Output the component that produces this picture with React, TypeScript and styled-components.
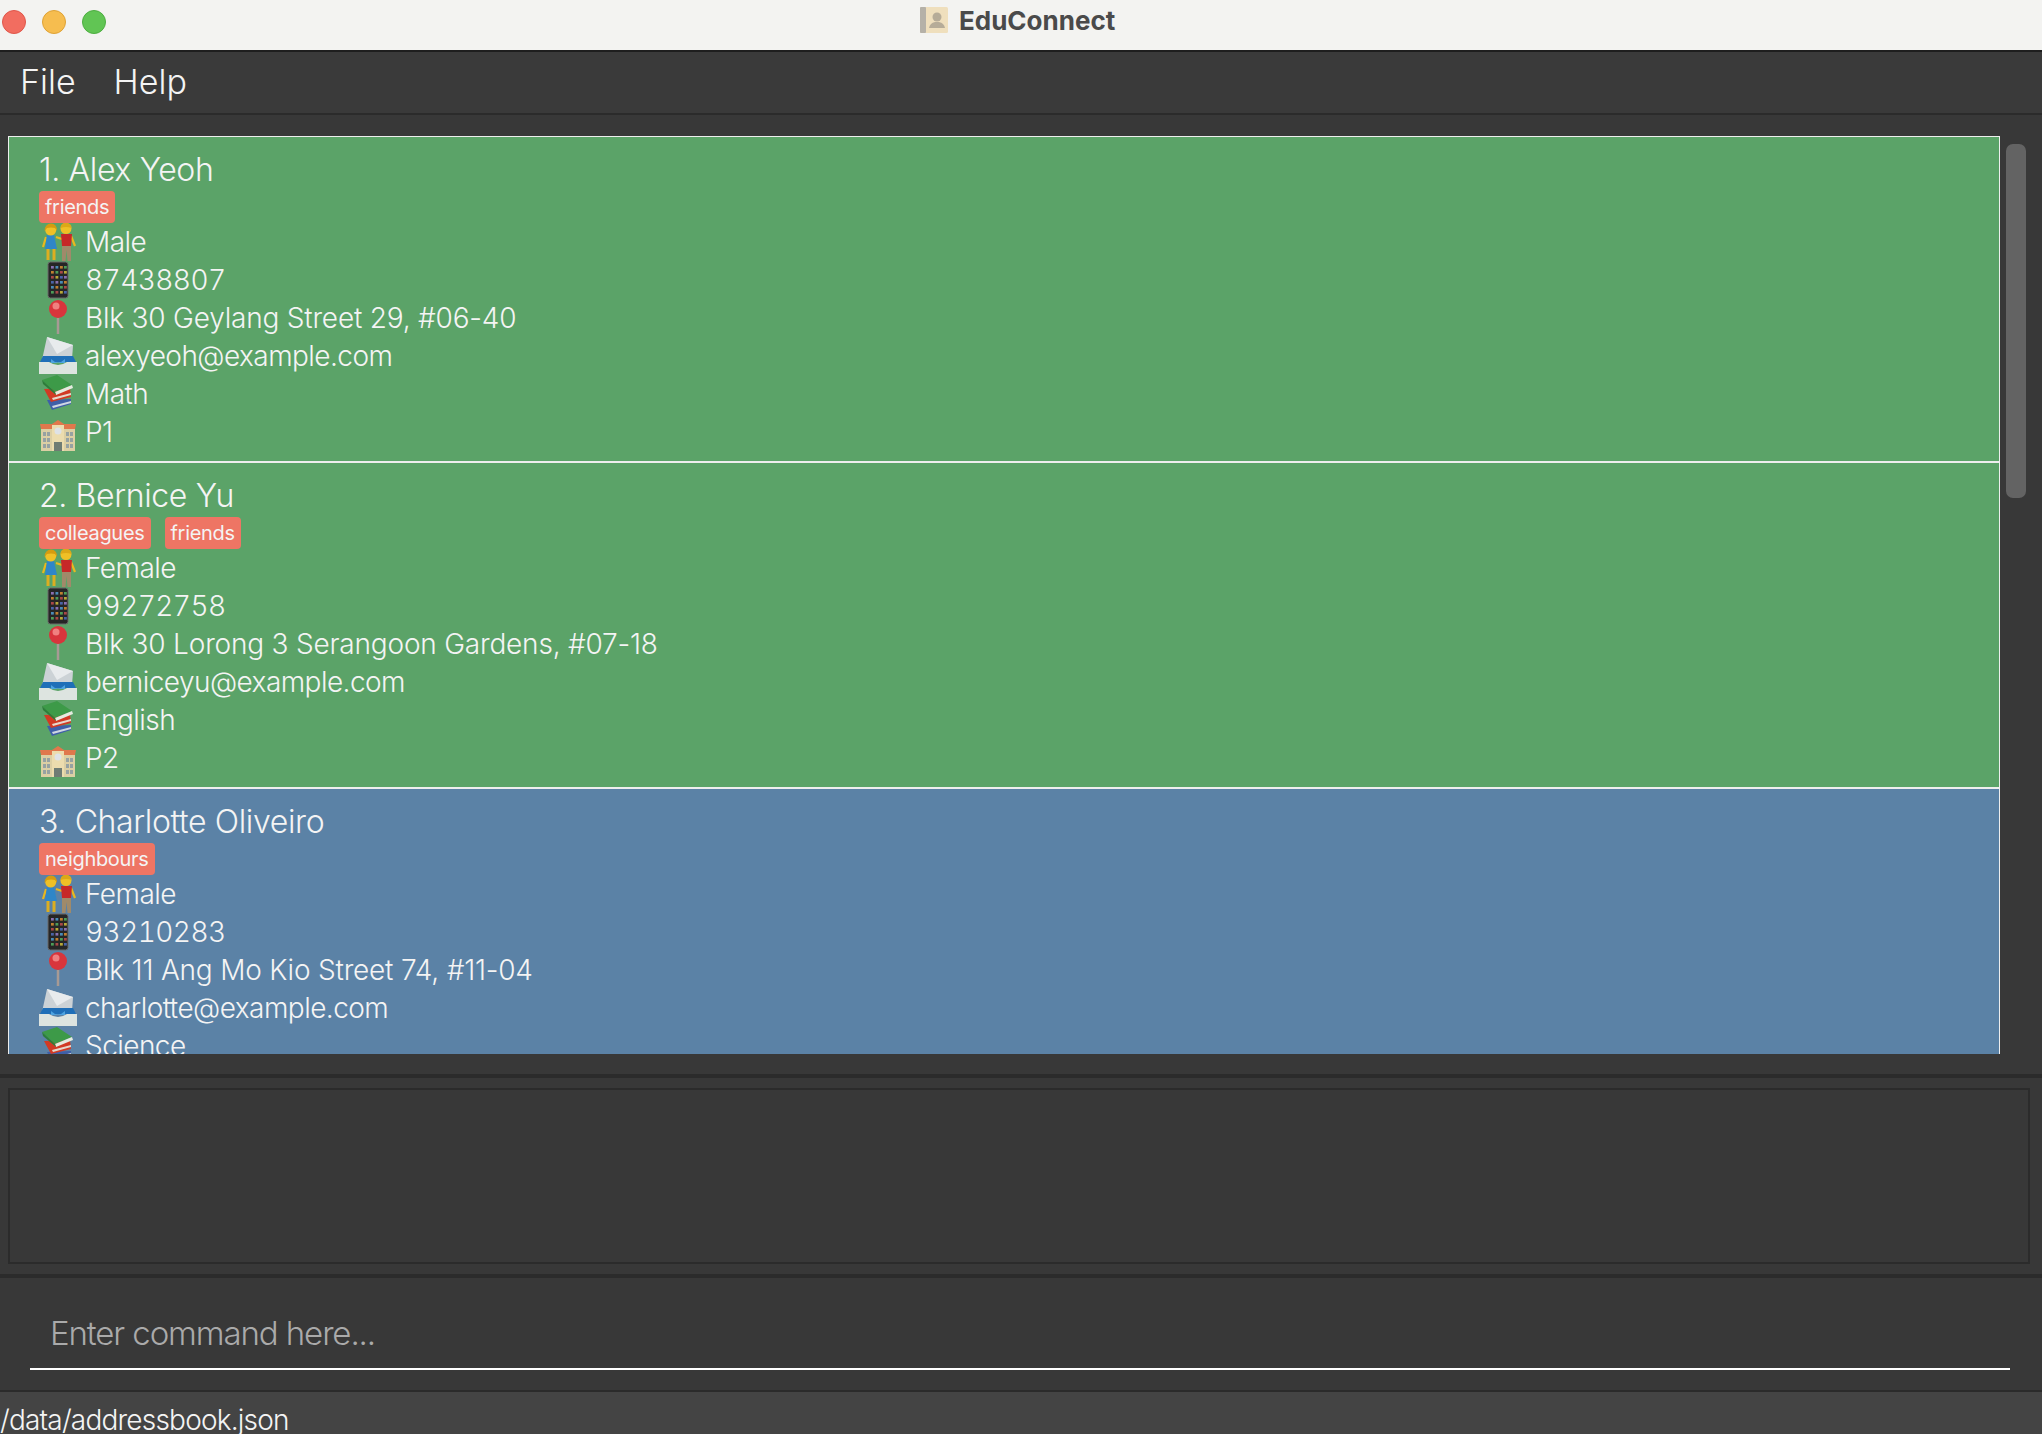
import React from 'react';
import styled, { createGlobalStyle } from 'styled-components';

const GlobalStyle = createGlobalStyle`
  html, body {
    margin: 0;
    padding: 0;
    background: #383838;
  }
  * {
    box-sizing: border-box;
  }
`;

const Window = styled.div`
  width: 2042px;
  height: 1434px;
  overflow: hidden;
  display: flex;
  flex-direction: column;
  background: #383838;
  color: #f4f4f4;
  font-family: Inter, 'Noto Sans', sans-serif;
`;

// macOS title bar
const TitleBar = styled.div`
  height: 52px;
  flex: none;
  display: flex;
  align-items: center;
  padding-bottom: 6px;
  background: #f3f3f1;
  border-bottom: 2px solid #1e1e1e;
  position: relative;
`;

const Lights = styled.div`
  display: flex;
  gap: 16px;
  padding-left: 2px;
`;

const Light = styled.span<{ $color: string; $edge: string }>`
  width: 24px;
  height: 24px;
  border-radius: 50%;
  background: ${props => props.$color};
  border: 1px solid ${props => props.$edge};
`;

const WindowTitle = styled.div`
  position: absolute;
  left: 920px;
  top: 6px;
  display: flex;
  align-items: center;
  gap: 11px;
  height: 28px;
  font-size: 26px;
  font-weight: 700;
  color: #4a4a4a;
`;

const MenuBar = styled.div`
  height: 63px;
  flex: none;
  display: flex;
  align-items: center;
  gap: 38px;
  padding: 0 0 2px 20px;
  background: #3a3a3a;
  border-bottom: 2px solid #2b2b2b;
  font-size: 34px;
  font-weight: 300;
`;

const ListPane = styled.div`
  height: 959px;
  flex: none;
  display: flex;
  align-items: flex-start;
  padding: 21px 0 0 8px;
`;

const ListViewport = styled.div`
  width: 1992px;
  height: 918px;
  overflow: hidden;
  flex: none;
`;

const ScrollThumb = styled.div`
  width: 20px;
  height: 354px;
  margin: 8px 0 0 6px;
  border-radius: 7px;
  background: #636363;
`;

const Card = styled.div<{ $tone: string }>`
  height: 326px;
  padding: 14px 0 0 30px;
  background: ${props => props.$tone};
  border: 1px solid #eeeeee;
`;

const Name = styled.div`
  height: 38px;
  line-height: 38px;
  font-size: 32px;
  font-weight: 300;
  letter-spacing: -0.35px;
`;

const TagRow = styled.div`
  display: flex;
  gap: 14px;
  margin-top: 2px;
`;

const Tag = styled.span`
  height: 32px;
  line-height: 32px;
  padding: 0 6px;
  border-radius: 4px;
  background: #ee7564;
  font-size: 20px;
  letter-spacing: -0.3px;
`;

const Row = styled.div<{ $numeric?: boolean; $spacing?: string }>`
  height: 38px;
  display: flex;
  align-items: center;
  font-size: 28px;
  font-weight: 300;
  letter-spacing: ${props => props.$spacing ?? '-0.55px'};
  font-variant-numeric: ${props => (props.$numeric ? 'tabular-nums' : 'normal')};
`;

const RowIcon = styled.svg`
  width: 40px;
  height: 40px;
  flex: none;
  margin: 0 7px 0 -1px;
  overflow: visible;
  filter: blur(0.6px);
`;

const Splitter = styled.div`
  height: 4px;
  flex: none;
  background: #2b2b2b;
`;

const ResultPane = styled.div`
  height: 196px;
  flex: none;
  padding: 10px 12px 10px 8px;
`;

const ResultBox = styled.div`
  height: 100%;
  border: 2px solid #2b2b2b;
`;

const CommandPane = styled.div`
  height: 112px;
  flex: none;
  padding: 0 32px 20px 30px;
  display: flex;
  align-items: flex-end;
`;

const CommandInput = styled.input`
  width: 100%;
  height: 70px;
  padding: 0 20px 2px 20px;
  background: transparent;
  border: none;
  border-bottom: 2px solid #ffffff;
  outline: none;
  font-family: inherit;
  font-size: 33px;
  font-weight: 300;
  letter-spacing: -1.1px;
  color: #f4f4f4;

  &::placeholder {
    color: #aaaaaa;
    opacity: 1;
  }
`;

const StatusBar = styled.div`
  height: 44px;
  flex: none;
  padding: 11px 0 0 0;
  background: #444444;
  border-top: 2px solid #2b2b2b;
  font-size: 28px;
  line-height: 34px;
  font-weight: 300;
  letter-spacing: -0.8px;
  white-space: nowrap;
`;

const CoupleIcon = () => (
  <RowIcon viewBox="0 0 40 40">
    <path d="M8 15 L5 25 M18 15 L24 17 M33 14 L37 24" stroke="#e8b820" strokeWidth="2.200" fill="none" />
    <path d="M10 26 V38 M16 26 V38" stroke="#dcae20" strokeWidth="3" fill="none" />
    <path d="M9 13 H16 L19 27 H7 Z" fill="#2f86c8" />
    <circle cx="12.700" cy="8" r="5.500" fill="#efc026" />
    <path d="M6.500 9 Q7 1.500 13 1.500 Q19 1.500 19 9 L17 6 Q13 5 9 6 Z" fill="#d49c10" />
    <path d="M24 23 H33 L33 39 H29.500 L28.500 28 L27.500 39 H24 Z" fill="#a08a6a" />
    <path d="M23 12 H34 L33 24 H24 Z" fill="#c62828" />
    <circle cx="28" cy="6.500" r="5.500" fill="#efc026" />
    <path d="M22.500 6 Q23 0.500 28 1 Q33.500 1 33.500 6 Q28 4 22.500 6 Z" fill="#dca818" />
  </RowIcon>
);

const phoneDots = ['#8a70b0', '#4a8cb8', '#c08030', '#4e9c58', '#a84848', '#b8a838', '#4a64a8'];

const PhoneIcon = () => (
  <RowIcon viewBox="0 0 40 40">
    <rect x="10" y="2" width="20" height="36" rx="2.500" fill="#262626" stroke="#6a6a6a" strokeWidth="1" />
    {[6, 11, 16, 21, 26, 31].map((y, i) =>
      [13, 17.500, 22, 26].map((x, j) => (
        <rect key={`${x}-${y}`} x={x} y={y} width="2.800" height="2.600" fill={phoneDots[(i * 2 + j) % phoneDots.length]} />
      ))
    )}
  </RowIcon>
);

const PinIcon = () => (
  <RowIcon viewBox="0 0 40 40">
    <path d="M20 20 V36" stroke="#a79a94" strokeWidth="2.500" />
    <circle cx="20" cy="11" r="9" fill="#d8353c" />
    <circle cx="18" cy="8" r="3.500" fill="#f08080" />
  </RowIcon>
);

const EnvelopeIcon = () => (
  <RowIcon viewBox="0 0 40 40">
    <path d="M9 1 L35 9 L34 24 H4 Z" fill="#ccd2d6" />
    <path d="M9 1 L19 18 L35 9 Z" fill="#e8ebed" />
    <path d="M5 20 H35 L38 26 H2 Z" fill="#1f6fb8" />
    <path d="M13 23 Q20 30 27 23 V27 H13 Z" fill="#4da3e0" />
    <path d="M1 26 H11 Q20 32 29 26 H39 V38 H1 Z" fill="#dde4e0" />
  </RowIcon>
);

const BooksIcon = () => (
  <RowIcon viewBox="0 0 40 40">
    <path d="M9 26 L33 25 L33 30 L14 36 Z" fill="#3f5fa8" />
    <path d="M14 32 L33 27 V29 L15 34 Z" fill="#cfd6e2" />
    <path d="M6 15 L13 28 L33 23 L32 14 Z" fill="#d23a24" />
    <path d="M14 24 L33 19 V21 L15 26 Z" fill="#e6d8cc" />
    <path d="M4 6 L19 1 L34 11 L17 18 Z" fill="#3d9a48" />
    <path d="M17 18 L34 11 L35 14 L18 21 Z" fill="#e4ebe0" />
    <path d="M4 6 L17 18 L18 21 L5 10 Z" fill="#2d7d3a" />
  </RowIcon>
);

const windowRows = [20, 26, 32];

const SchoolIcon = () => (
  <RowIcon viewBox="0 0 40 40">
    <rect x="3" y="16" width="34" height="23" fill="#dccfa4" />
    <path d="M2 12 H14 L20 8 L26 12 H38 L37 17 H3 Z" fill="#e0784c" />
    <rect x="14" y="13" width="12" height="26" fill="#ecdcae" />
    <circle cx="20" cy="19" r="3.500" fill="#dfe2e6" />
    <rect x="16" y="30" width="8" height="9" fill="#6f7c74" />
    {[5, 9, 28, 32].map(x =>
      windowRows.map(y => <rect key={`${x}-${y}`} x={x} y={y} width="3" height="4" fill="#97a2a2" />)
    )}
  </RowIcon>
);

const AppLogo = () => (
  <svg width="28" height="26" viewBox="0 0 28 26">
    <rect width="28" height="26" rx="1.500" fill="#efdfbd" />
    <rect width="6" height="26" rx="1" fill="#b5b1a8" />
    <circle cx="17" cy="10" r="4.500" fill="#b6ac98" />
    <path d="M9 21 Q10 16 15 15 H19 Q24 16 25 21 Z" fill="#b6ac98" />
  </svg>
);

interface Person {
  name: string;
  tags: string[];
  tone: string;
  gender: string;
  phone: string;
  address: string;
  email: string;
  subject: string;
  level: string;
}

const people: Person[] = [
  {
    name: '1. Alex Yeoh',
    tags: ['friends'],
    tone: '#5ba368',
    gender: 'Male',
    phone: '87438807',
    address: 'Blk 30 Geylang Street 29, #06-40',
    email: 'alexyeoh@example.com',
    subject: 'Math',
    level: 'P1'
  },
  {
    name: '2. Bernice Yu',
    tags: ['colleagues', 'friends'],
    tone: '#5ba368',
    gender: 'Female',
    phone: '99272758',
    address: 'Blk 30 Lorong 3 Serangoon Gardens, #07-18',
    email: 'berniceyu@example.com',
    subject: 'English',
    level: 'P2'
  },
  {
    name: '3. Charlotte Oliveiro',
    tags: ['neighbours'],
    tone: '#5b82a6',
    gender: 'Female',
    phone: '93210283',
    address: 'Blk 11 Ang Mo Kio Street 74, #11-04',
    email: 'charlotte@example.com',
    subject: 'Science',
    level: 'P3'
  }
];

const App: React.FC = () => {
  return (
    <Window>
      <GlobalStyle />
      <TitleBar>
        <Lights>
          <Light $color="#f26d60" $edge="#e0564a" />
          <Light $color="#f6bd4f" $edge="#dfa235" />
          <Light $color="#61c554" $edge="#4dae41" />
        </Lights>
        <WindowTitle>
          <AppLogo />
          EduConnect
        </WindowTitle>
      </TitleBar>
      <MenuBar>
        <span>File</span>
        <span>Help</span>
      </MenuBar>
      <ListPane>
        <ListViewport>
          {people.map(person => (
            <Card key={person.name} $tone={person.tone}>
              <Name>{person.name}</Name>
              <TagRow>
                {person.tags.map(tag => (
                  <Tag key={tag}>{tag}</Tag>
                ))}
              </TagRow>
              <Row><CoupleIcon />{person.gender}</Row>
              <Row $numeric><PhoneIcon />{person.phone}</Row>
              <Row $spacing="-0.2px"><PinIcon />{person.address}</Row>
              <Row><EnvelopeIcon />{person.email}</Row>
              <Row><BooksIcon />{person.subject}</Row>
              <Row><SchoolIcon />{person.level}</Row>
            </Card>
          ))}
        </ListViewport>
        <ScrollThumb />
      </ListPane>
      <Splitter />
      <ResultPane>
        <ResultBox />
      </ResultPane>
      <Splitter />
      <CommandPane>
        <CommandInput placeholder="Enter command here..." readOnly />
      </CommandPane>
      <StatusBar>/data/addressbook.json</StatusBar>
    </Window>
  );
};

export default App;
